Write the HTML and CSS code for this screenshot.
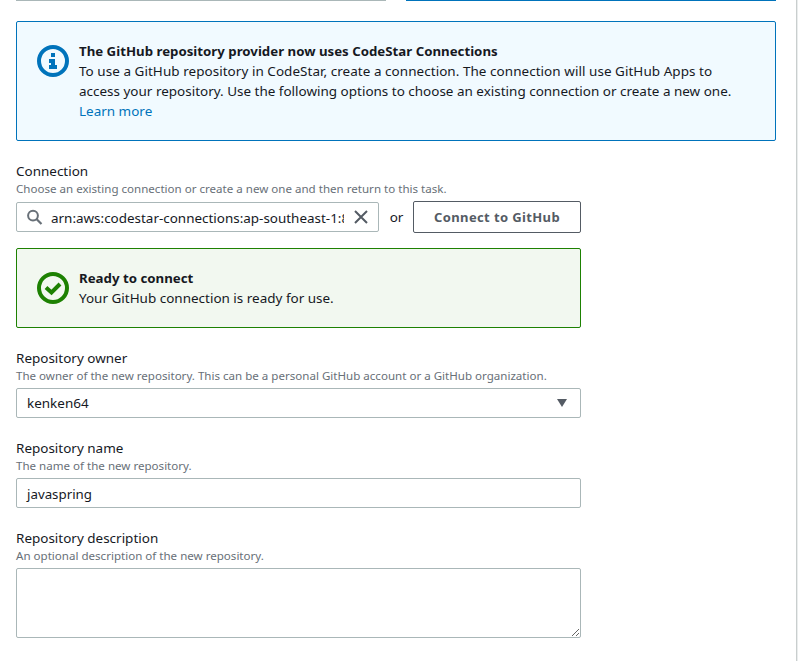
FILE: index.html
```
<!DOCTYPE html>
<html lang="en">
<head>
<meta charset="utf-8">
<title>Connect repository</title>
<link rel="stylesheet" href="styles.css">
</head>
<body>
<main class="panel">
  <div class="tiles"><div class="tile"></div><div class="tile tile-selected"></div></div>

  <section class="alert alert-info">
    <svg class="alert-icon" viewBox="0 0 32 32"><circle cx="16" cy="16" r="14" fill="none" stroke="currentColor" stroke-width="4"/><path fill="currentColor" d="M14 8h4v4h-4zM12 14h6v6h2v4h-8v-4h2v-2h-2z"/></svg>
    <div class="alert-body">
      <strong>The GitHub repository provider now uses CodeStar Connections</strong>
      <p><span class="wide">To use a GitHub repository in CodeStar, create a connection. The connection will use GitHub Apps to</span><br>access your repository. Use the following options to choose an existing connection or create a new one.<br><a class="link">Learn more</a></p>
    </div>
  </section>

  <section class="field field-connection">
    <label class="label">Connection</label>
    <span class="hint">Choose an existing connection or create a new one and then return to this task.</span>
    <div class="connect-row">
      <div class="search">
        <svg class="search-icon" viewBox="0 0 16 16"><circle cx="6" cy="6.6" r="4.9" fill="none" stroke="currentColor" stroke-width="2"/><path d="M9.5 10l5 5" stroke="currentColor" stroke-width="2.2"/></svg>
        <span class="search-value">arn:aws:codestar-connections:ap-southeast-1:8</span>
        <svg class="clear-icon" viewBox="0 0 14 14"><path d="M1 1l12 12M13 1L1 13" stroke="currentColor" stroke-width="2"/></svg>
      </div>
      <span class="or">or</span>
      <button class="button">Connect to GitHub</button>
    </div>
  </section>

  <section class="alert alert-success">
    <svg class="alert-icon" viewBox="0 0 32 32"><circle cx="16" cy="16" r="14" fill="none" stroke="currentColor" stroke-width="4"/><path fill="none" stroke="currentColor" stroke-width="4" d="M9 15.5l5.5 5L23 12"/></svg>
    <div class="alert-body">
      <strong>Ready to connect</strong>
      <p>Your GitHub connection is ready for use.</p>
    </div>
  </section>

  <section class="field">
    <label class="label">Repository owner</label>
    <span class="hint">The owner of the new repository. This can be a personal GitHub account or a GitHub organization.</span>
    <div class="input"><span>kenken64</span><svg class="caret" viewBox="0 0 10 8"><path fill="currentColor" d="M0 0h10L5 8z"/></svg></div>
  </section>
  <section class="field">
    <label class="label">Repository name</label>
    <span class="hint">The name of the new repository.</span>
    <div class="input input-text"><span>javaspring</span></div>
  </section>
  <section class="field">
    <label class="label">Repository description</label>
    <span class="hint">An optional description of the new repository.</span>
    <textarea class="textarea"></textarea>
  </section>
</main>
</body>
</html>
```
FILE: styles.css
```
* { box-sizing: border-box; }
body { margin: 0; background: #eaeded; color: #16191f; font: 13.47px/20px "Noto Sans", sans-serif; }
p { margin: 0; }
.panel { width: 797px; height: 661px; padding: 0 20px 0 16px; background: #fff; border-right: 1px solid #c9cece; overflow: hidden; }
.tiles { display: flex; gap: 20px; height: 1px; margin-bottom: 20px; }
.tile { width: 370px; background: #aab7b8; }
.tile-selected { background: #0073bb; }
.alert { display: flex; gap: 10px; padding: 19px 20px; border: 1px solid; border-radius: 2px; }
.alert-info { width: 760px; height: 120px; background: #f1faff; border-color: #0073bb; }
.alert-success { width: 565px; height: 80px; background: #f2f8f0; border-color: #1d8102; margin-bottom: 20px; }
.alert-icon { width: 32px; height: 32px; margin-top: 4px; flex: none; }
.alert-info .alert-icon { color: #0073bb; }
.alert-success .alert-icon { color: #1d8102; }
.alert-body { white-space: nowrap; }
.alert-body strong { display: block; font-weight: 700; font-size: 13.25px; }
.wide { letter-spacing: .05px; }
.link { color: #0073bb; }
.field { width: 565px; margin-bottom: 20px; }
.field-connection { margin: 20px 0 15px; }
.label, .hint { display: block; white-space: nowrap; }
.hint { color: #687078; font-size: 11.57px; line-height: 16px; margin-bottom: 4px; }
.connect-row { display: flex; align-items: center; height: 32px; }
.search { display: flex; align-items: center; width: 363px; height: 30px; padding: 0 10px; border: 1px solid #aab7b8; border-radius: 2px; }
.search-icon { width: 16px; height: 16px; color: #687078; flex: none; }
.search-value { width: 293px; margin: 0 10px 0 8px; padding-top: 2px; overflow: hidden; white-space: nowrap; font-size: 13.45px; }
.clear-icon { width: 14px; height: 14px; color: #545b64; flex: none; }
.or { width: 35px; margin-right: -1px; text-align: center; }
.button { width: 168px; height: 32px; padding: 0; border: 1px solid #545b64; border-radius: 2px; background: #fff; color: #545b64; font: 700 13px/20px "Noto Sans", sans-serif; letter-spacing: .38px; }
.input { display: flex; align-items: center; justify-content: space-between; height: 30px; padding: 0 13px 0 10px; border: 1px solid #aab7b8; border-radius: 2px; }
.input-text { padding-top: 2px; font-size: 13.3px; }
.caret { width: 10px; height: 8px; color: #545b64; }
.textarea { display: block; width: 565px; height: 70px; border: 1px solid #aab7b8; border-radius: 2px; resize: vertical; background: #fff; }
```
